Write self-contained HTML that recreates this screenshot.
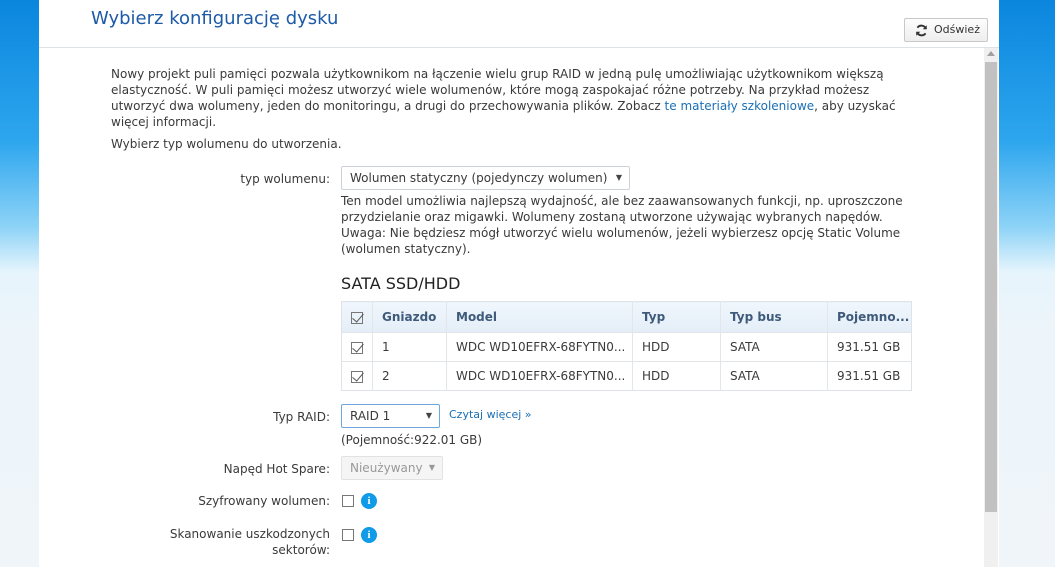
<!DOCTYPE html>
<html><head><meta charset="utf-8"><style>
*{margin:0;padding:0;box-sizing:border-box}
body{width:1055px;height:567px;overflow:hidden;position:relative;font-family:"DejaVu Sans","Liberation Sans",sans-serif;font-size:12px;color:#3a3a3a;
background:linear-gradient(180deg,#0a86de 0%,#2ea6ee 25%,#8dd3f7 40%,#e6f4fc 48%,#eef5fa 60%,#eff5f9 100%)}
.panel{position:absolute;left:39px;top:0;width:960px;height:567px;background:#fff}
.abs{position:absolute}
h1{position:absolute;left:91px;top:8px;font-weight:normal;font-size:18px;color:#1d5aa8}
.hr{position:absolute;left:39px;top:47px;width:960px;height:1px;background:#dde2e6}
.btn{position:absolute;left:904px;top:18px;width:84px;height:24px;border:1px solid #c8c8c8;background:linear-gradient(#fdfdfd,#eeeeee);border-radius:2px;font-size:11px;color:#333;line-height:22px;padding-left:29px}
.sb{position:absolute;left:984px;top:48px;width:14px;height:519px;background:#f0f0f0}
.thumb{position:absolute;left:985px;top:62px;width:12px;height:450px;background:#c1c1c1}
.p{position:absolute;left:111px;line-height:16px;width:788px}
a{color:#1a6fb5;text-decoration:none}
.lbl{position:absolute;text-align:right;right:725px;line-height:16px}
.sel{position:absolute;border:1px solid #ccd2d8;border-radius:2px;background:#fff;height:24px;line-height:22px;padding-left:8px}
.sel .ar{position:absolute;right:7px;top:0;font-size:8px;color:#444}
table{position:absolute;left:341px;top:301px;width:571px;border-collapse:collapse;border:1px solid #dfe3e7}
td,th{height:29px;border-left:1px solid #e3e6e9;padding-left:9px;text-align:left;white-space:nowrap}
th{background:linear-gradient(#f0f6fc,#e4eef8);color:#3f5a7a;font-weight:bold;height:31px;font-size:12px}
tr+tr td{border-top:1px solid #e3e6e9}
.cb{display:inline-block;width:12px;height:12px;border:1px solid #777;vertical-align:middle}
.cb.c{position:relative}
.cb.c:after{content:"";position:absolute;left:3px;top:-2px;width:5px;height:10px;border-right:1.5px solid #555;border-bottom:1.5px solid #555;transform:rotate(40deg)}
.info{position:absolute;width:16px;height:16px;border-radius:50%;background:#0f9be8;color:#fff;font-weight:bold;font-size:11px;text-align:center;line-height:16px;font-family:"Liberation Serif",serif}
</style></head><body>
<div class="panel"></div>
<h1>Wybierz konfigurację dysku</h1>
<div class="btn"><svg class="abs" style="left:10px;top:5px" width="13" height="13" viewBox="0 0 16 16"><path d="M13.5 6A6 6 0 0 0 3 4.5M2.5 10A6 6 0 0 0 13 11.5" fill="none" stroke="#333" stroke-width="2.4"/><path d="M14.5 1.5v5h-5z M1.5 14.5v-5h5z" fill="#333"/></svg>Odśwież</div>
<div class="hr"></div>
<div class="sb"></div><div class="thumb"></div>
<div class="abs" style="left:987px;top:51px;width:0;height:0;border-left:4px solid transparent;border-right:4px solid transparent;border-bottom:5px solid #a0a0a0"></div>
<div class="p" style="top:66px">Nowy projekt puli pamięci pozwala użytkownikom na łączenie wielu grup RAID w jedną pulę umożliwiając użytkownikom większą elastyczność. W puli pamięci możesz utworzyć wiele wolumenów, które mogą zaspokajać różne potrzeby. Na przykład możesz utworzyć dwa wolumeny, jeden do monitoringu, a drugi do przechowywania plików. Zobacz <a>te materiały szkoleniowe</a>, aby uzyskać więcej informacji.</div>
<div class="p" style="top:136px">Wybierz typ wolumenu do utworzenia.</div>
<div class="lbl" style="top:171px">typ wolumenu:</div>
<div class="sel" style="left:341px;top:166px;width:289px">Wolumen statyczny (pojedynczy wolumen)<span class="ar">▼</span></div>
<div class="abs" style="left:341px;top:193px;line-height:16px;width:570px">Ten model umożliwia najlepszą wydajność, ale bez zaawansowanych funkcji, np. uproszczone przydzielanie oraz migawki. Wolumeny zostaną utworzone używając wybranych napędów. Uwaga: Nie będziesz mógł utworzyć wielu wolumenów, jeżeli wybierzesz opcję Static Volume (wolumen statyczny).</div>
<div class="abs" style="left:341px;top:274px;font-size:16px;color:#222">SATA SSD/HDD</div>
<table>
<tr><th style="width:31px;border-left:0"><span class="cb c"></span></th><th style="width:74px">Gniazdo</th><th style="width:186px">Model</th><th style="width:88px">Typ</th><th style="width:107px">Typ bus</th><th>Pojemno...</th></tr>
<tr><td style="border-left:0"><span class="cb c"></span></td><td>1</td><td>WDC WD10EFRX-68FYTN0...</td><td>HDD</td><td>SATA</td><td>931.51 GB</td></tr>
<tr><td style="border-left:0"><span class="cb c"></span></td><td>2</td><td>WDC WD10EFRX-68FYTN0...</td><td>HDD</td><td>SATA</td><td>931.51 GB</td></tr>
</table>
<div class="lbl" style="top:409px">Typ RAID:</div>
<div class="sel" style="left:341px;top:404px;width:99px;border-color:#6fa6dc">RAID 1<span class="ar">▼</span></div>
<div class="abs" style="left:449px;top:408px;font-size:11px;color:#1a6fb5">Czytaj więcej »</div>
<div class="abs" style="left:341px;top:433px">(Pojemność:922.01 GB)</div>
<div class="lbl" style="top:461px">Napęd Hot Spare:</div>
<div class="sel" style="left:341px;top:456px;width:102px;background:#f5f5f5;border-color:#e2e2e2;color:#999">Nieużywany<span class="ar" style="color:#999">▼</span></div>
<div class="lbl" style="top:493px">Szyfrowany wolumen:</div>
<span class="cb" style="position:absolute;left:342px;top:495px"></span><div class="info" style="left:361px;top:493px">i</div>
<div class="lbl" style="top:526px">Skanowanie uszkodzonych<br>sektorów:</div>
<span class="cb" style="position:absolute;left:342px;top:529px"></span><div class="info" style="left:361px;top:527px">i</div>
</body></html>
